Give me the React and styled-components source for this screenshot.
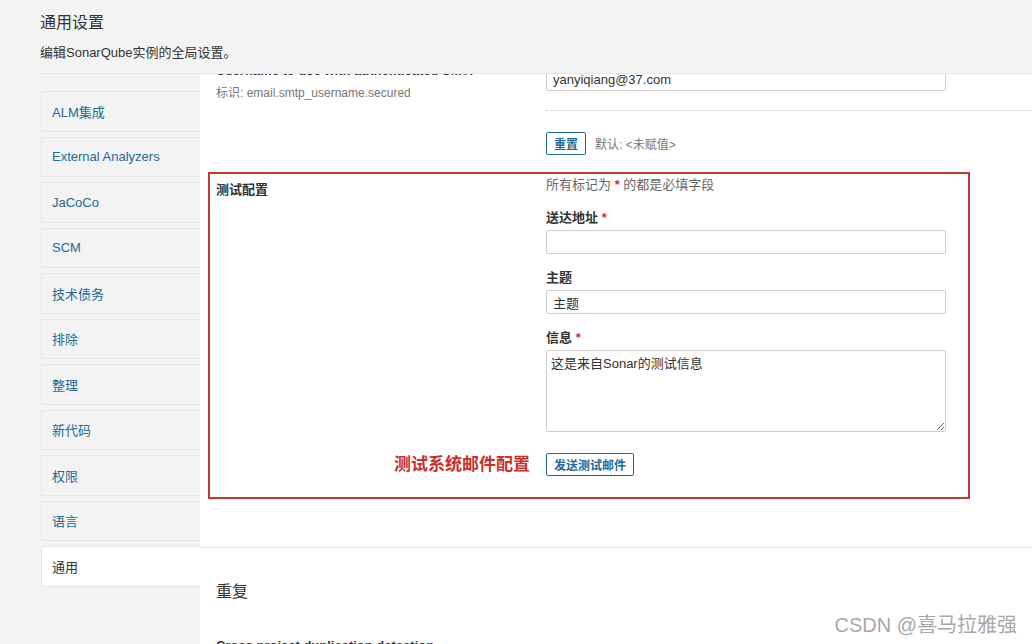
import React from "react";
import styled, { createGlobalStyle } from "styled-components";

const GlobalStyle = createGlobalStyle`
  html, body {
    margin: 0;
    padding: 0;
    background: #f3f3f3;
  }
  body {
    font-family: "Liberation Sans", "Noto Sans CJK SC", sans-serif;
    font-size: 13px;
    color: #333;
  }
  * {
    box-sizing: border-box;
  }
`;

const categories = [
  "ALM集成",
  "External Analyzers",
  "JaCoCo",
  "SCM",
  "技术债务",
  "排除",
  "整理",
  "新代码",
  "权限",
  "语言",
  "通用",
];

function App() {
  return (
    <>
      <GlobalStyle />
      <Page>
        <Header>
          <Title>通用设置</Title>
          <Subtitle>编辑SonarQube实例的全局设置。</Subtitle>
        </Header>
        <Body>
          <Sidebar>
            {categories.map((name) => (
              <Category key={name} $active={name === "通用"}>
                {name}
              </Category>
            ))}
          </Sidebar>
          <Panel>
            <Scrolled>
              <Definition>
                <DefLeft>
                  <DefName>Username to use with authenticated SMTP</DefName>
                  <DefKey>标识: email.smtp_username.secured</DefKey>
                </DefLeft>
                <DefRight>
                  <TextInput defaultValue="yanyiqiang@37.com" />
                  <Divider />
                  <Actions>
                    <Button>重置</Button>
                    <DefaultValue>默认: &lt;未赋值&gt;</DefaultValue>
                  </Actions>
                </DefRight>
              </Definition>

              <Highlight>
                <BlockTitle>测试配置</BlockTitle>
                <Form>
                  <Note>
                    所有标记为 <Mandatory>*</Mandatory> 的都是必填字段
                  </Note>
                  <FieldGroup>
                    <Label>
                      送达地址 <Mandatory>*</Mandatory>
                    </Label>
                    <TextInput defaultValue="" />
                  </FieldGroup>
                  <FieldGroup>
                    <Label>主题</Label>
                    <TextInput defaultValue="主题" />
                  </FieldGroup>
                  <FieldGroup>
                    <Label>
                      信息 <Mandatory>*</Mandatory>
                    </Label>
                    <TextArea defaultValue="这是来自Sonar的测试信息" />
                  </FieldGroup>
                </Form>
                <Annotation>测试系统邮件配置</Annotation>
                <SendRow>
                  <Button>发送测试邮件</Button>
                </SendRow>
              </Highlight>

              <Section>
                <SectionTitle>重复</SectionTitle>
                <DefName>Cross project duplication detection</DefName>
              </Section>
            </Scrolled>
          </Panel>
        </Body>
        <Watermark>CSDN @喜马拉雅强</Watermark>
      </Page>
    </>
  );
}

const Page = styled.div`
  position: relative;
  height: 644px;
  overflow: hidden;
  display: flex;
  flex-direction: column;
`;

const Header = styled.header`
  flex: none;
  height: 74px;
  margin-left: 40px;
  padding-top: 13px;
  border-bottom: 1px solid #e6e6e6;
`;

const Title = styled.h1`
  margin: 0;
  font-size: 16px;
  font-weight: 400;
  line-height: 20px;
`;

const Subtitle = styled.p`
  margin: 11px 0 0;
  font-size: 13px;
  line-height: 18px;
`;

const Body = styled.div`
  flex: 1;
  min-height: 0;
  display: flex;
`;

const Sidebar = styled.nav`
  flex: none;
  width: 159px;
  margin-left: 41px;
  padding-top: 17px;
  display: flex;
  flex-direction: column;
  gap: 5px;
`;

const Category = styled.div`
  height: 40.5px;
  display: flex;
  align-items: center;
  padding-left: 10px;
  border: 1px solid #e6e6e6;
  border-right: none;
  border-radius: 2px 0 0 2px;
  background: ${(p) => (p.$active ? "#fff" : "#f3f3f3")};
  color: ${(p) => (p.$active ? "#333" : "#236a97")};
  font-size: 13px;
`;

const Panel = styled.main`
  flex: 1;
  min-width: 0;
  background: #fff;
  overflow: hidden;
`;

const Scrolled = styled.div`
  margin-top: -12px;
`;

const Definition = styled.div`
  display: grid;
  grid-template-columns: 330px 1fr;
  padding-left: 16px;
`;

const DefLeft = styled.div``;

const DefName = styled.h3`
  margin: 0;
  font-size: 13px;
  font-weight: 700;
  line-height: 18px;
`;

const DefKey = styled.div`
  margin-top: 4px;
  font-size: 12px;
  line-height: 18px;
  color: #777;
`;

const DefRight = styled.div`
  padding-top: 5px;
`;

const TextInput = styled.input`
  display: block;
  width: 400px;
  height: 24px;
  padding: 0 6px;
  border: 1px solid #cdcdcd;
  border-radius: 2px;
  font-family: inherit;
  font-size: 13px;
  color: #333;
  background: #fff;
  outline: none;
`;

const TextArea = styled.textarea`
  display: block;
  width: 400px;
  height: 82px;
  padding: 4px;
  border: 1px solid #cdcdcd;
  border-radius: 2px;
  font-family: inherit;
  font-size: 13px;
  line-height: 18px;
  color: #333;
  outline: none;
`;

const Divider = styled.div`
  margin-top: 19px;
  border-top: 1px dotted #d0d0d0;
`;

const Actions = styled.div`
  margin-top: 21px;
  display: flex;
  align-items: center;
  gap: 9px;
`;

const Button = styled.button`
  height: 23px;
  padding: 0 7px;
  border: 1px solid #236a97;
  border-radius: 2px;
  background: #fff;
  color: #236a97;
  font-family: inherit;
  font-size: 12px;
  font-weight: 700;
  cursor: pointer;
`;

const DefaultValue = styled.span`
  font-size: 12px;
  color: #777;
`;

const Highlight = styled.div`
  width: 762px;
  margin: 17px 0 0 8px;
  padding: 2px 0 21px 6px;
  border: 2px solid #c23a2e;
  display: grid;
  grid-template-columns: 330px 1fr;
  align-items: start;
`;

const BlockTitle = styled.h3`
  margin: 5px 0 0;
  font-size: 13px;
  font-weight: 700;
  line-height: 18px;
`;

const Form = styled.div``;

const Note = styled.div`
  font-size: 13px;
  line-height: 18px;
  color: #666;
`;

const Mandatory = styled.span`
  color: #d02f3a;
  font-weight: 700;
`;

const FieldGroup = styled.div`
  margin-top: 15px;
`;

const Label = styled.label`
  display: block;
  margin-bottom: 3px;
  font-size: 13px;
  font-weight: 700;
  line-height: 18px;
`;

const Annotation = styled.div`
  align-self: center;
  justify-self: end;
  margin-top: 21px;
  padding-right: 16px;
  color: #c9302c;
  font-size: 17px;
  font-weight: 700;
  line-height: 22px;
`;

const SendRow = styled.div`
  margin-top: 21px;
`;

const Section = styled.section`
  margin-top: 48px;
  border-top: 1px solid #e6e6e6;
  padding: 33px 0 0 16px;
`;

const SectionTitle = styled.h2`
  margin: 0 0 34px;
  font-size: 16px;
  font-weight: 400;
  line-height: 22px;
`;

const Watermark = styled.div`
  position: absolute;
  right: 15px;
  bottom: 7px;
  font-size: 20px;
  line-height: 24px;
  color: #a8a8a8;
  text-shadow: 0 0 2px #fff;
  pointer-events: none;
`;

export default App;
